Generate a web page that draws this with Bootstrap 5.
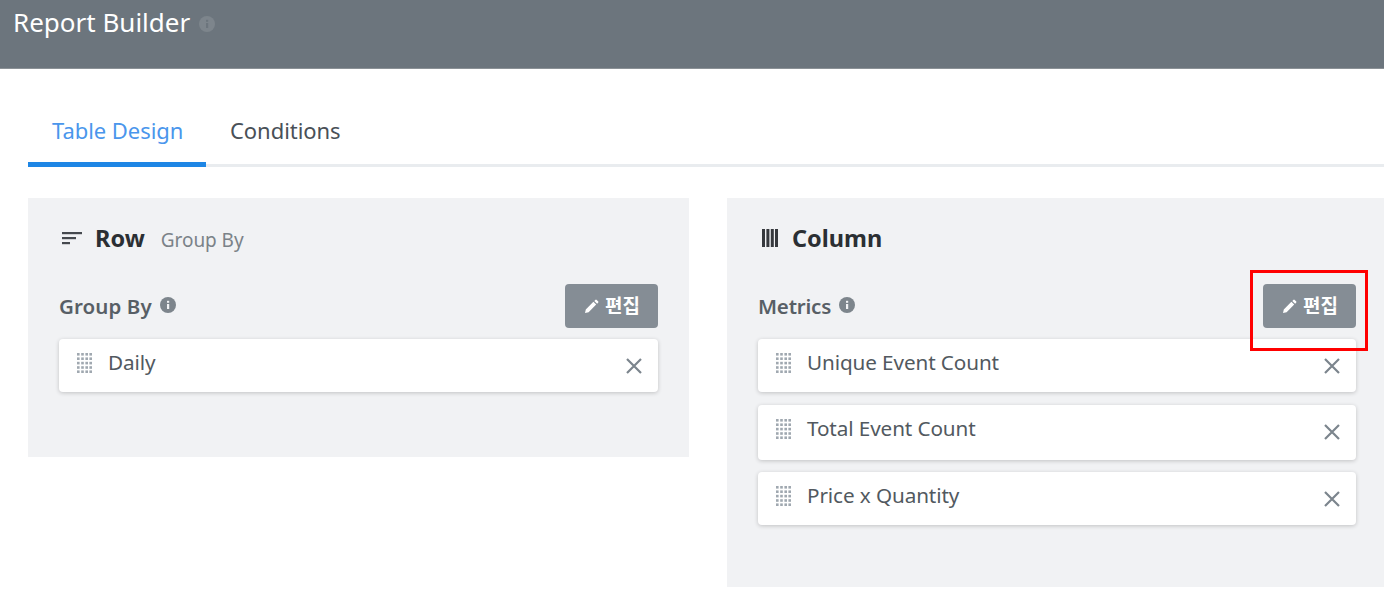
<!DOCTYPE html>
<html lang="ko"><head><meta charset="utf-8"><title>Report Builder</title>
<link href="https://cdn.jsdelivr.net/npm/bootstrap@5.3.0/dist/css/bootstrap.min.css" rel="stylesheet">
<style>
html,body{height:597px;overflow:hidden}
body{font-family:"Noto Sans","Noto Sans CJK KR",sans-serif;color:#495057;background:#fff}
.rb-head{height:69px;background:#6c757d;border-bottom:1px solid #8b9196;padding:3px 13px 0;color:#fff;font-size:26px;line-height:38px}
.rb-tabs{margin:41px 0 0 28px;border-bottom:3px solid #e9ecef;height:57px}
.rb-tab{padding:4px 24px 0;font-size:22px;line-height:32px;height:57px;color:#495057;letter-spacing:-.05px;white-space:nowrap}
.rb-tab.on{color:#4a96ec;border-bottom:5px solid #1e86e5;width:178px;flex:none}
.rb-panels{margin:31px 0 0 28px;gap:38px}
.rb-panel{background:#f1f2f4;padding:19px 31px 0;flex:none}
.rb-left{width:661px;height:259px}
.rb-right{width:660px;height:389px}
.rb-title{height:42px;color:#2b2f33;font-size:23.5px;font-weight:700;line-height:42px;gap:13px}
.rb-sub{font-size:19px;font-weight:400;color:#7b8288;margin:3px 0 0 3px;letter-spacing:-.05px}
.rb-lab{margin-top:25px;height:44px;font-size:20.5px;font-weight:600;color:#585f66;letter-spacing:-.2px}
.rb-wide{letter-spacing:.1px}
.rb-edit{width:93px;height:44px;background:#858d95;border:0;border-radius:4px;color:#fff;font-size:19px;font-weight:700;padding:0 0 0 1px;gap:6px}
.rb-item{height:53px;background:#fff;border-radius:4px;box-shadow:0 1px 4px rgba(0,0,0,.2);margin-top:11px;padding:0 15px 5px 18px;font-size:20.7px;color:#525960;letter-spacing:-.1px;gap:16px}
.rb-item+.rb-item{margin-top:13px;height:55px;padding-bottom:7px}
.rb-item+.rb-item+.rb-item{margin-top:12px;height:53px;padding-bottom:5px}
.rb-grip{width:15px;height:20px;flex:none}
.rb-x{margin-left:auto;margin-top:5px;flex:none}
.rb-info{flex:none;margin-left:8px;margin-bottom:3px}
.rb-headinfo{margin:13px 0 0 9px}
.rb-rowicon{margin:2px -1px 0 3px}
.rb-colicon{margin:0 1px 0 4px}
.rb-mark{position:absolute;left:1250px;top:270px;width:118px;height:81px;border:3px solid #f00;pointer-events:none}
</style></head><body>
<div class="rb-head d-flex align-items-start">Report Builder
<svg class="rb-headinfo" width="16" height="16" viewBox="0 0 16 16"><circle cx="8" cy="8" r="8" fill="#7d858c"/><rect x="7" y="7" width="2.2" height="5" fill="#6c757d"/><rect x="7" y="3.8" width="2.2" height="2" fill="#6c757d"/></svg></div>
<div class="rb-tabs d-flex"><div class="rb-tab on">Table Design</div><div class="rb-tab">Conditions</div></div>
<div class="rb-panels d-flex align-items-start">
<section class="rb-panel rb-left">
<div class="rb-title d-flex align-items-center"><svg class="rb-rowicon" width="21" height="16" viewBox="0 0 21 16" fill="#45494e"><rect y="1" width="20" height="2.2"/><rect y="6" width="14" height="2.2"/><rect y="11" width="8" height="2.2"/></svg><span>Row</span><span class="rb-sub">Group By</span></div>
<div class="rb-lab d-flex align-items-center"><span class="rb-wide">Group By</span><svg class="rb-info" width="16" height="16" viewBox="0 0 16 16"><circle cx="8" cy="8" r="8" fill="#7d858c"/><rect x="7" y="7" width="2.2" height="5" fill="#f1f2f4"/><rect x="7" y="3.8" width="2.2" height="2" fill="#f1f2f4"/></svg>
<button class="btn rb-edit ms-auto d-flex align-items-center justify-content-center"><svg width="15" height="15" viewBox="0 0 15 15" fill="#fff"><path d="M1 14l.8-3.6 7.6-7.6 2.8 2.8-7.6 7.6zM10.3 1.9l1-1a1 1 0 0 1 1.4 0l1.4 1.4a1 1 0 0 1 0 1.4l-1 1z"/></svg>편집</button></div>
<div class="rb-item d-flex align-items-center"><svg class="rb-grip" viewBox="0 0 15 20" fill="#a0a8b0"><g id="g"><rect y="0" width="2.6" height="2.6"/><rect x="4.2" width="2.6" height="2.6"/><rect x="8.4" width="2.6" height="2.6"/><rect x="12.4" width="2.6" height="2.6"/></g><use href="#g" y="4.4"/><use href="#g" y="8.8"/><use href="#g" y="13.2"/><use href="#g" y="17.4"/></svg><span>Daily</span><svg class="rb-x" width="18" height="18" viewBox="0 0 18 18" stroke="#7c858d" stroke-width="2.2"><path d="M2 2l14 14M16 2L2 16"/></svg></div>
</section>
<section class="rb-panel rb-right">
<div class="rb-title d-flex align-items-center"><svg class="rb-colicon" width="16" height="18" viewBox="0 0 16 18" fill="#36393d"><rect width="3" height="18"/><rect x="4.4" width="3" height="18"/><rect x="8.8" width="3" height="18"/><rect x="13" width="3" height="18"/></svg><span>Column</span></div>
<div class="rb-lab d-flex align-items-center"><span>Metrics</span><svg class="rb-info" width="16" height="16" viewBox="0 0 16 16"><circle cx="8" cy="8" r="8" fill="#7d858c"/><rect x="7" y="7" width="2.2" height="5" fill="#f1f2f4"/><rect x="7" y="3.8" width="2.2" height="2" fill="#f1f2f4"/></svg>
<button class="btn rb-edit ms-auto d-flex align-items-center justify-content-center"><svg width="15" height="15" viewBox="0 0 15 15" fill="#fff"><path d="M1 14l.8-3.6 7.6-7.6 2.8 2.8-7.6 7.6zM10.3 1.9l1-1a1 1 0 0 1 1.4 0l1.4 1.4a1 1 0 0 1 0 1.4l-1 1z"/></svg>편집</button></div>
<div class="rb-item d-flex align-items-center"><svg class="rb-grip" viewBox="0 0 15 20" fill="#a0a8b0"><use href="#g"/><use href="#g" y="4.4"/><use href="#g" y="8.8"/><use href="#g" y="13.2"/><use href="#g" y="17.4"/></svg><span>Unique Event Count</span><svg class="rb-x" width="18" height="18" viewBox="0 0 18 18" stroke="#7c858d" stroke-width="2.2"><path d="M2 2l14 14M16 2L2 16"/></svg></div>
<div class="rb-item d-flex align-items-center"><svg class="rb-grip" viewBox="0 0 15 20" fill="#a0a8b0"><use href="#g"/><use href="#g" y="4.4"/><use href="#g" y="8.8"/><use href="#g" y="13.2"/><use href="#g" y="17.4"/></svg><span>Total Event Count</span><svg class="rb-x" width="18" height="18" viewBox="0 0 18 18" stroke="#7c858d" stroke-width="2.2"><path d="M2 2l14 14M16 2L2 16"/></svg></div>
<div class="rb-item d-flex align-items-center"><svg class="rb-grip" viewBox="0 0 15 20" fill="#a0a8b0"><use href="#g"/><use href="#g" y="4.4"/><use href="#g" y="8.8"/><use href="#g" y="13.2"/><use href="#g" y="17.4"/></svg><span>Price x Quantity</span><svg class="rb-x" width="18" height="18" viewBox="0 0 18 18" stroke="#7c858d" stroke-width="2.2"><path d="M2 2l14 14M16 2L2 16"/></svg></div>
</section>
</div>
<div class="rb-mark"></div>
<script src="https://cdn.jsdelivr.net/npm/bootstrap@5.3.0/dist/js/bootstrap.bundle.min.js"></script>
</body></html>
